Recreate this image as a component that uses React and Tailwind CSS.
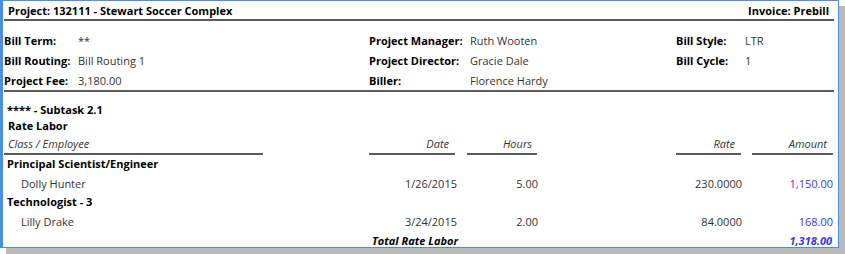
const font = { fontFamily: '"Open Sans", "Noto Sans", sans-serif' };

function InfoRow({ a, av, b, bv, c, cv }) {
  return (
    <div className="flex h-[20px] items-center">
      <span className="w-[74px] font-bold text-black">{a}</span>
      <span className="w-[291px] text-[#333]">{av}</span>
      <span className="w-[101px] font-bold text-black">{b}</span>
      <span className="w-[206px] text-[#333]">{bv}</span>
      <span className="w-[69px] font-bold text-black">{c}</span>
      <span className="text-[#333]">{cv}</span>
    </div>
  );
}

function LineRow({ name, date, hours, rate, amount }) {
  return (
    <div className="flex h-[21px] items-center pt-[2px] text-[#333]">
      <span className="w-[365px] pl-[17px]">{name}</span>
      <span className="w-[88px] text-right">{date}</span>
      <span className="w-[81px] text-right">{hours}</span>
      <span className="w-[204px] text-right">{rate}</span>
      <span className="w-[91px] text-right text-[#3535ee]">{amount}</span>
    </div>
  );
}

export default function App() {
  return (
    <div className="w-[845px] h-[254px] bg-white text-[11px] leading-none" style={font}>
      <div className="w-[839px] h-[248px] border border-[#4b90de] border-l-[3px] shadow-[6px_6px_0_0_#b9b9b9] pl-[1px] pr-[4px]">
        {/* header */}
        <div className="flex h-[20px] items-end justify-between border-b-2 border-[#5c5c5c] px-[4px] pb-[3px] font-bold text-black">
          <span>Project: 132111 - Stewart Soccer Complex</span>
          <span className="pr-[1px]">Invoice: Prebill</span>
        </div>

        {/* bill info */}
        <div className="pt-[9px] border-b-2 border-[#5c5c5c]">
          <InfoRow a="Bill Term:" av="**" b="Project Manager:" bv="Ruth Wooten" c="Bill Style:" cv="LTR" />
          <InfoRow a="Bill Routing:" av="Bill Routing 1" b="Project Director:" bv="Gracie Dale" c="Bill Cycle:" cv="1" />
          <InfoRow a="Project Fee:" av="3,180.00" b="Biller:" bv="Florence Hardy" c="" cv="" />
        </div>

        {/* subtask */}
        <div className="pt-[10px] font-bold text-black">
          <div className="flex h-[15px] items-center pl-[3px]">**** - Subtask 2.1</div>
          <div className="flex h-[17px] items-center pl-[4px]">Rate Labor</div>
        </div>

        {/* column headers */}
        <div className="flex items-end italic text-[#333]">
          <span className="w-[259px] h-[21px] border-b-2 border-[#5c5c5c] pl-[4px] pt-[4px]">Class / Employee</span>
          <span className="ml-[106px] w-[86px] h-[21px] border-b-2 border-[#5c5c5c] text-right pr-[6px] pt-[4px]">Date</span>
          <span className="ml-[12px] w-[70px] h-[21px] border-b-2 border-[#5c5c5c] text-right pr-[5px] pt-[4px]">Hours</span>
          <span className="ml-[139px] w-[65px] h-[21px] border-b-2 border-[#5c5c5c] text-right pr-[6px] pt-[4px]">Rate</span>
          <span className="ml-[11px] w-[81px] h-[21px] border-b-2 border-[#5c5c5c] text-right pr-[6px] pt-[4px]">Amount</span>
        </div>

        {/* rows */}
        <div className="flex h-[17px] items-center pl-[3px] font-bold text-black">Principal Scientist/Engineer</div>
        <LineRow name="Dolly Hunter" date="1/26/2015" hours="5.00" rate="230.0000" amount="1,150.00" />
        <div className="flex h-[17px] items-center pl-[3px] font-bold text-black">Technologist - 3</div>
        <LineRow name="Lilly Drake" date="3/24/2015" hours="2.00" rate="84.0000" amount="168.00" />
        <div className="flex h-[18px] items-center font-bold italic">
          <span className="ml-[368px] w-[370px] text-black">Total Rate Labor</span>
          <span className="w-[91px] text-right pr-[1px] text-[#3535ee]">1,318.00</span>
        </div>
      </div>
    </div>
  );
}
